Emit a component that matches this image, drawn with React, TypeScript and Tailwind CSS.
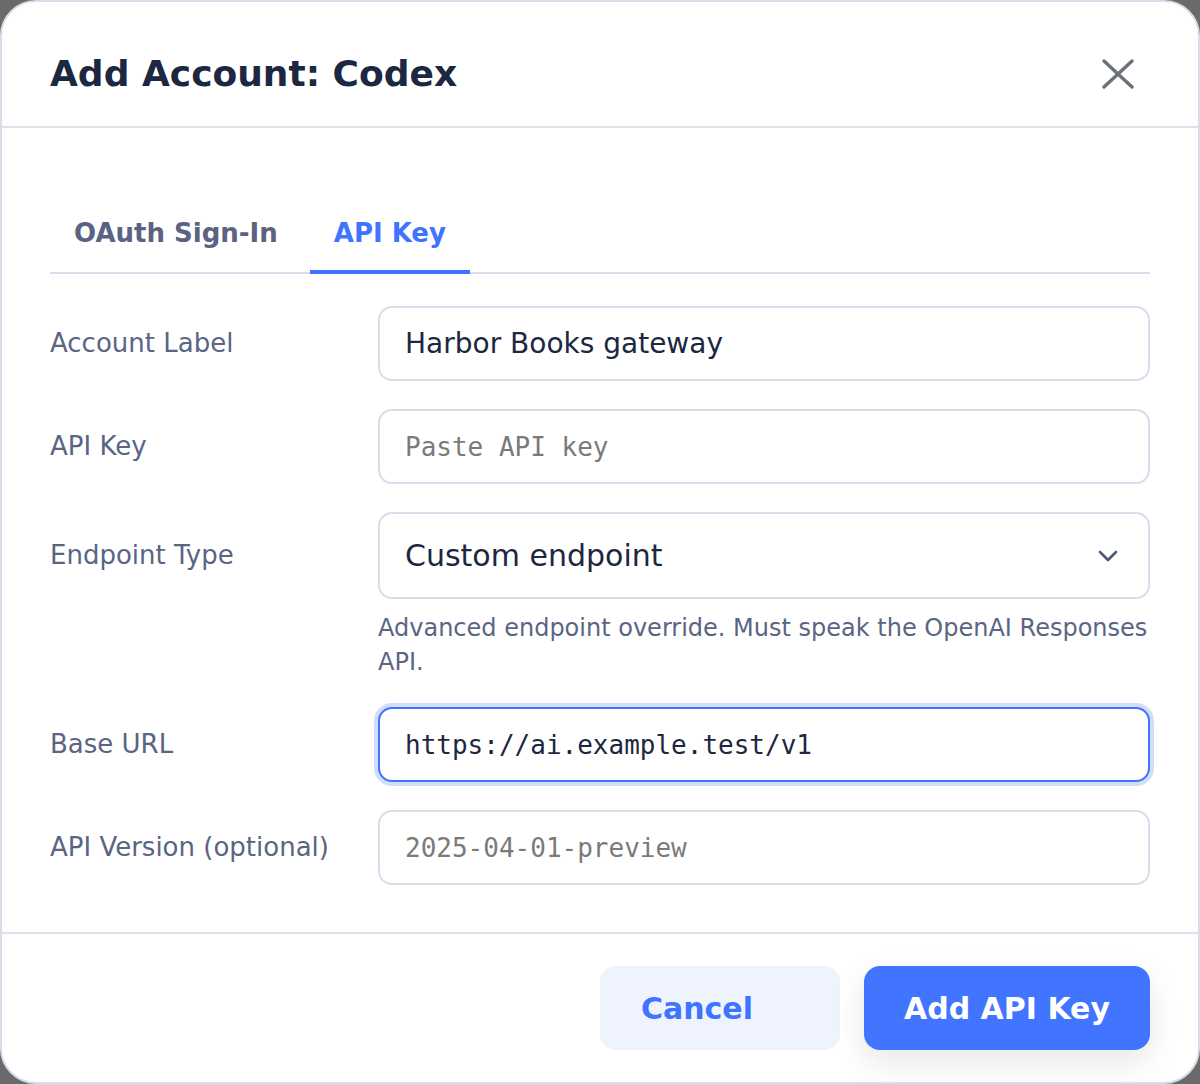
import { useState } from "react";

const fieldBase =
  "h-[75px] w-full rounded-[14px] border-2 bg-white px-[25px] outline-none";

function CloseIcon() {
  return (
    <svg width="44" height="44" viewBox="0 0 44 44" fill="none">
      <path
        d="M8 9 L36 35 M36 9 L8 35"
        stroke="#6b7279"
        strokeWidth="3.5"
        strokeLinecap="round"
      />
    </svg>
  );
}

function Chevron() {
  return (
    <svg width="20" height="12" viewBox="0 0 20 12" fill="none">
      <path
        d="M2 2 L10 10 L18 2"
        stroke="#4d5672"
        strokeWidth="2.6"
        strokeLinecap="round"
        strokeLinejoin="round"
      />
    </svg>
  );
}

function Row({
  label,
  height = "h-[75px]",
  children,
}: {
  label: string;
  height?: string;
  children: React.ReactNode;
}) {
  return (
    <div className="flex">
      <div
        className={`flex w-[328px] shrink-0 items-center text-[26px] text-[#5a6584] ${height}`}
      >
        {label}
      </div>
      <div className="min-w-0 flex-1">{children}</div>
    </div>
  );
}

export default function App() {
  const [tab, setTab] = useState<"oauth" | "key">("key");

  return (
    <div className="h-[1084px] w-[1200px] bg-[#6a6a6a] font-['DejaVu_Sans',sans-serif]">
      <div className="flex h-[1084px] w-[1200px] flex-col overflow-hidden rounded-[36px] border-2 border-[#d9ddea] bg-white">
        {/* header */}
        <div className="flex h-[126px] shrink-0 items-start justify-between border-b-2 border-[#dde1ec] pl-[48px] pr-[58px] pt-[50px]">
          <h2 className="text-[36px] font-bold leading-[44px] text-[#1c2742]">
            Add Account: Codex
          </h2>
          <button
            type="button"
            aria-label="Close"
            className="flex h-[44px] w-[44px] items-center justify-center"
          >
            <CloseIcon />
          </button>
        </div>

        {/* body */}
        <div className="flex-1 px-[48px] pt-[66px]">
          <div className="flex gap-[8px] border-b-2 border-[#d8ddeb]">
            <button
              type="button"
              onClick={() => setTab("oauth")}
              className={`relative h-[78px] px-[24px] text-[26px] font-bold ${
                tab === "oauth" ? "text-[#3f74ff]" : "text-[#5a6382]"
              }`}
            >
              OAuth Sign-In
              {tab === "oauth" && (
                <span className="absolute inset-x-0 bottom-[-2px] h-[4px] bg-[#3f74ff]" />
              )}
            </button>
            <button
              type="button"
              onClick={() => setTab("key")}
              className={`relative h-[78px] px-[24px] text-[26px] font-bold ${
                tab === "key" ? "text-[#3f74ff]" : "text-[#5a6382]"
              }`}
            >
              API Key
              {tab === "key" && (
                <span className="absolute inset-x-0 bottom-[-2px] h-[4px] bg-[#3f74ff]" />
              )}
            </button>
          </div>

          <div className="mt-[32px] flex flex-col gap-[28px]">
            <Row label="Account Label">
              <input
                defaultValue="Harbor Books gateway"
                className={`${fieldBase} border-[#d8ddeb] text-[28px] text-[#1d2740]`}
              />
            </Row>

            <Row label="API Key">
              <input
                placeholder="Paste API key"
                className={`${fieldBase} border-[#d8ddeb] font-['DejaVu_Sans_Mono',monospace] text-[26px] text-[#1d2740] placeholder:text-[#7a7a7a]`}
              />
            </Row>

            <Row label="Endpoint Type" height="h-[87px]">
              <div className="flex h-[87px] w-full items-center justify-between rounded-[14px] border-2 border-[#d8ddeb] bg-white pl-[25px] pr-[30px] text-[30px] text-[#1d2740]">
                <span>Custom endpoint</span>
                <Chevron />
              </div>
              <p className="mt-[12px] text-[24px] leading-[34px] text-[#5a6584]">
                Advanced endpoint override. Must speak the OpenAI Responses API.
              </p>
            </Row>

            <Row label="Base URL">
              <input
                defaultValue="https://ai.example.test/v1"
                className={`${fieldBase} border-[#3f74ff] font-['DejaVu_Sans_Mono',monospace] text-[26px] text-[#1d2740] ring-4 ring-[#d2ddfc]`}
              />
            </Row>

            <Row label="API Version (optional)">
              <input
                placeholder="2025-04-01-preview"
                className={`${fieldBase} border-[#d8ddeb] font-['DejaVu_Sans_Mono',monospace] text-[26px] text-[#1d2740] placeholder:text-[#7a7a7a]`}
              />
            </Row>
          </div>
        </div>

        {/* footer */}
        <div className="flex shrink-0 justify-end gap-[24px] border-t-2 border-[#dde1ec] px-[48px] pb-[32px] pt-[32px]">
          <button
            type="button"
            className="flex h-[84px] w-[240px] items-center rounded-[16px] bg-[#eef3fe] pl-[41px] text-[30px] font-bold text-[#3f74ff]"
          >
            Cancel
          </button>
          <button
            type="button"
            className="flex h-[84px] items-center rounded-[16px] bg-[#4174ff] px-[40px] text-[30px] font-bold text-white shadow-[0_12px_32px_rgba(15,23,42,0.10)]"
          >
            Add API Key
          </button>
        </div>
      </div>
    </div>
  );
}
